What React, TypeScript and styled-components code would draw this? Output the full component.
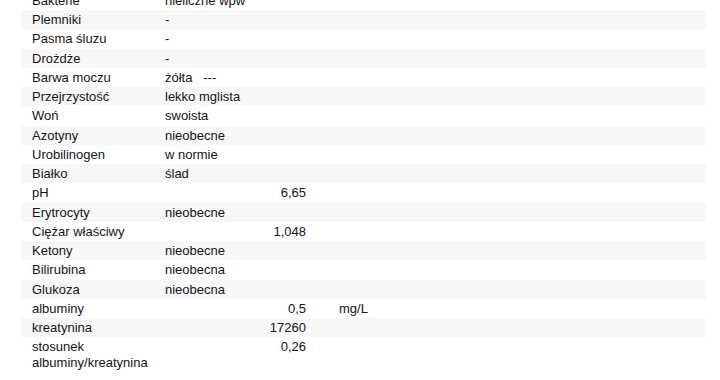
import React from 'react';
import styled, { createGlobalStyle } from 'styled-components';

type Result = {
  name: string;
  text?: string;
  num?: string;
  unit?: string;
};

const results: Result[] = [
  { name: 'Bakterie', text: 'nieliczne wpw' },
  { name: 'Plemniki', text: '-' },
  { name: 'Pasma śluzu', text: '-' },
  { name: 'Drożdże', text: '-' },
  { name: 'Barwa moczu', text: 'żółta   ---' },
  { name: 'Przejrzystość', text: 'lekko mglista' },
  { name: 'Woń', text: 'swoista' },
  { name: 'Azotyny', text: 'nieobecne' },
  { name: 'Urobilinogen', text: 'w normie' },
  { name: 'Białko', text: 'ślad' },
  { name: 'pH', num: '6,65' },
  { name: 'Erytrocyty', text: 'nieobecne' },
  { name: 'Ciężar właściwy', num: '1,048' },
  { name: 'Ketony', text: 'nieobecne' },
  { name: 'Bilirubina', text: 'nieobecna' },
  { name: 'Glukoza', text: 'nieobecna' },
  { name: 'albuminy', num: '0,5', unit: 'mg/L' },
  { name: 'kreatynina', num: '17260' },
  { name: 'stosunek albuminy/kreatynina', num: '0,26' },
];

function App() {
  return (
    <>
      <GlobalStyle />
      <Page>
        <Table>
          {results.map((r, i) => (
            <Row key={r.name} $striped={i % 2 === 1}>
              <Name>{r.name}</Name>
              <TextValue>{r.text}</TextValue>
              <NumValue>{r.num}</NumValue>
              <Unit>{r.unit}</Unit>
            </Row>
          ))}
        </Table>
      </Page>
    </>
  );
}

const GlobalStyle = createGlobalStyle`
  html, body {
    margin: 0;
    padding: 0;
    background: #fff;
  }
  body {
    font-family: "Liberation Sans", Arial, sans-serif;
    font-size: 13px;
    color: #141414;
    overflow: hidden;
  }
`;

const Page = styled.div`
  width: 720px;
  height: 380px;
  overflow: hidden;
  padding-left: 21px;
  box-sizing: border-box;
`;

const Table = styled.div`
  width: 685px;
  margin-top: -9.25px;
  display: flex;
  flex-direction: column;
`;

const Row = styled.div<{ $striped: boolean }>`
  display: grid;
  grid-template-columns: 144px 85px 56px 1fr;
  align-items: start;
  padding: 2px 0;
  line-height: 15.25px;
  background: ${p => (p.$striped ? '#f7f7f7' : 'transparent')};
`;

const Name = styled.div`
  padding-left: 11px;
  padding-right: 12px;
`;

const TextValue = styled.div`
  white-space: pre;
`;

const NumValue = styled.div`
  text-align: right;
`;

const Unit = styled.div`
  padding-left: 33px;
`;

export default App;
